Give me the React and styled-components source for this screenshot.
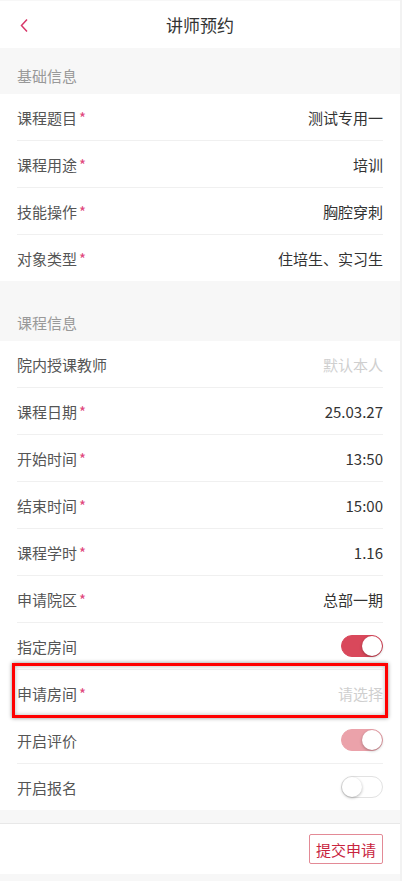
import React, { useState } from 'react';
import styled, { createGlobalStyle } from 'styled-components';

const GlobalStyle = createGlobalStyle`
  html, body {
    margin: 0;
    padding: 0;
    background: #f2f2f2;
    font-family: "Noto Sans CJK SC", "Noto Sans", sans-serif;
  }
`;

const Page = styled.div`
  width: 400px;
  padding-top: 1px;
  background: #f7f7f7;
  min-height: 880px;
`;

const Header = styled.div`
  height: 47px;
  background: #fff;
  display: flex;
  align-items: center;
  justify-content: center;
  position: relative;
  font-size: 17px;
  color: #333;
`;

const BackButton = styled.div`
  position: absolute;
  left: 19px;
  top: 17px;
  display: flex;
`;

const SectionTitle = styled.div`
  height: 46px;
  box-sizing: border-box;
  padding: 8px 17px 0;
  display: flex;
  align-items: center;
  font-size: 15px;
  color: #999;
  margin-top: ${(p) => (p.$gap ? '14px' : '0')};
`;

const Group = styled.div`
  background: #fff;
  padding: 0 17px;
`;

const Row = styled.div`
  height: 46px;
  display: flex;
  align-items: center;
  justify-content: space-between;
  font-size: 15px;
  position: relative;
  & + & {
    border-top: 1px solid #f0f0f0;
  }
`;

const Label = styled.span`
  color: #555;
`;

const Star = styled.span`
  color: #e0457b;
  margin-left: 2px;
`;

const Value = styled.span`
  color: ${(p) => (p.$placeholder ? '#cfcfcf' : '#333')};
`;

// annotation frame drawn over the row
const Highlight = styled.div`
  position: absolute;
  z-index: 2;
  left: -5px;
  right: -5px;
  top: -7px;
  bottom: -2px;
  border: 3px solid #f00;
  box-shadow: 0 0 4px rgba(0, 0, 0, 0.45), inset 0 0 4px rgba(0, 0, 0, 0.3);
  pointer-events: none;
`;

const Toggle = styled.div`
  width: 42px;
  height: 22px;
  border-radius: 11px;
  box-sizing: border-box;
  background: ${(p) => (p.$on ? (p.$soft ? '#eba2aa' : '#d9485b') : '#fff')};
  border: 1px solid ${(p) => (p.$on ? (p.$soft ? '#eba2aa' : '#d9485b') : '#e2e2e2')};
  position: relative;
  &::after {
    content: '';
    position: absolute;
    top: 0;
    left: ${(p) => (p.$on ? '20px' : '0')};
    width: 20px;
    height: 20px;
    border-radius: 50%;
    background: #fff;
    box-shadow: 0 1px 3px rgba(0, 0, 0, 0.3);
  }
`;

const Footer = styled.div`
  margin-top: 13px;
  border-top: 1px solid #e8e8e8;
  background: #fff;
  height: 50px;
  display: flex;
  align-items: center;
  justify-content: flex-end;
  padding: 0 17px;
`;

const SubmitButton = styled.button`
  height: 30px;
  padding: 0 6px;
  background: #fff;
  border: 1px solid #e38a96;
  border-radius: 2px;
  color: #c8243e;
  font-family: inherit;
  font-size: 15px;
`;

const basic = [
  ['课程题目', true, '测试专用一'],
  ['课程用途', true, '培训'],
  ['技能操作', true, '胸腔穿刺'],
  ['对象类型', true, '住培生、实习生'],
];

const course = [
  ['院内授课教师', false, '默认本人', true],
  ['课程日期', true, '25.03.27'],
  ['开始时间', true, '13:50'],
  ['结束时间', true, '15:00'],
  ['课程学时', true, '1.16'],
  ['申请院区', true, '总部一期'],
];

function FieldRow({ label, required, value, placeholder }) {
  return (
    <Row>
      <Label>
        {label}
        {required && <Star>*</Star>}
      </Label>
      <Value $placeholder={placeholder}>{value}</Value>
    </Row>
  );
}

export default function App() {
  const [room] = useState(true);
  return (
    <Page>
      <GlobalStyle />
      <Header>
        <BackButton>
          <svg width="10" height="15" viewBox="0 0 10 15">
            <path d="M8 1.5 L2.5 7.5 L8 13.5" fill="none" stroke="#d8386a" strokeWidth="1.5" />
          </svg>
        </BackButton>
        讲师预约
      </Header>
      <SectionTitle>基础信息</SectionTitle>
      <Group>
        {basic.map(([l, r, v]) => (
          <FieldRow key={l} label={l} required={r} value={v} />
        ))}
      </Group>
      <SectionTitle $gap>课程信息</SectionTitle>
      <Group>
        {course.map(([l, r, v, p]) => (
          <FieldRow key={l} label={l} required={r} value={v} placeholder={p} />
        ))}
        <Row>
          <Label>指定房间</Label>
          <Toggle $on={room} />
        </Row>
        <Row>
          <Label>
            申请房间<Star>*</Star>
          </Label>
          <Value $placeholder>请选择</Value>
          <Highlight />
        </Row>
        <Row>
          <Label>开启评价</Label>
          <Toggle $on $soft />
        </Row>
        <Row>
          <Label>开启报名</Label>
          <Toggle />
        </Row>
      </Group>
      <Footer>
        <SubmitButton>提交申请</SubmitButton>
      </Footer>
    </Page>
  );
}
